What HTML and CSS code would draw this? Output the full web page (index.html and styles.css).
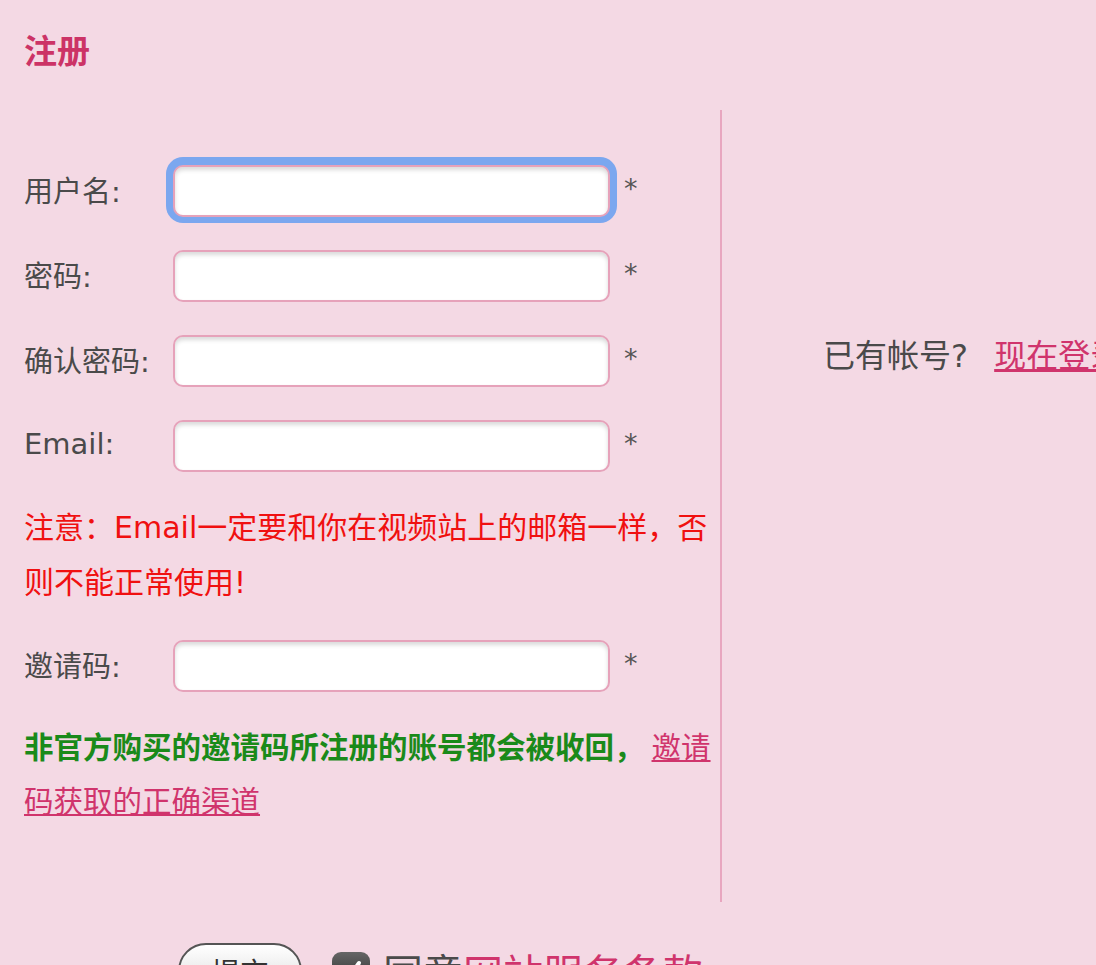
FILE: index.html
```html
<!DOCTYPE html>
<html lang="zh-CN">
<head>
    <meta charset="UTF-8">
    <meta name="viewport" content="width=device-width, initial-scale=1.0">
    <title>注册</title>
    <link rel="stylesheet" href="styles.css">
</head>
<body>

    <div class="page">
        <h1 class="title">注册</h1>

        <div class="main">
            <div class="reg-col">
                <div class="row">
                    <label class="label" for="username">用户名:</label>
                    <input class="field focused" type="text" id="username">
                    <span class="req">*</span>
                </div>
                <div class="row">
                    <label class="label" for="pwd">密码:</label>
                    <input class="field" type="password" id="pwd">
                    <span class="req">*</span>
                </div>
                <div class="row">
                    <label class="label" for="pwd2">确认密码:</label>
                    <input class="field" type="password" id="pwd2">
                    <span class="req">*</span>
                </div>
                <div class="row">
                    <label class="label" for="email">Email:</label>
                    <input class="field" type="text" id="email">
                    <span class="req">*</span>
                </div>

                <p class="note">注意：Email一定要和你在视频站上的邮箱一样，否则不能正常使用!</p>

                <div class="row">
                    <label class="label" for="invite">邀请码:</label>
                    <input class="field" type="text" id="invite">
                    <span class="req">*</span>
                </div>

                <p class="tip"><b>非官方购买的邀请码所注册的账号都会被收回，</b><a href="#">邀请码获取的正确渠道</a></p>
            </div>

            <div class="login-col">
                <p class="login-text">已有帐号? <a href="#">现在登录</a></p>
            </div>
        </div>

        <div class="actions">
            <button class="submit" type="button">提交</button>
            <label class="agree">
                <span class="check">
                    <svg width="26" height="26" viewBox="0 0 26 26"><path d="M6 14 L11 19 L21 5" fill="none" stroke="#fff" stroke-width="4" stroke-linecap="round" stroke-linejoin="round"/></svg>
                </span>
                同意<a href="#">网站服务条款</a>
            </label>
        </div>
    </div>

</body>
</html>
```

FILE: styles.css
```css
* {
    margin: 0;
    padding: 0;
    box-sizing: border-box;
    font-family: "DejaVu Sans", "Noto Sans CJK SC", sans-serif;
}

html, body {
    overflow: hidden;
}

body {
    background-color: #f4d9e4;
    color: #4a4a4a;
}

a {
    color: #d0346c;
}

.page {
    padding: 32px 0 0 24px;
    width: 1400px;
}

.title {
    font-size: 33px;
    line-height: 40px;
    color: #cc3366;
    font-weight: bold;
}

.main {
    display: flex;
    margin-top: 38px;
}

.reg-col {
    width: 698px;
    padding: 55px 6px 73px 0;
    border-right: 2px solid #e8a6bf;
}

.row {
    display: flex;
    align-items: center;
    height: 52px;
    margin-bottom: 33px;
    font-size: 29px;
}

.label {
    width: 149px;
    white-space: nowrap;
    margin-top: -4px;
}

.field {
    width: 437px;
    height: 52px;
    background: #fff;
    border: 2px solid #e6a2ba;
    border-radius: 10px;
    box-shadow: inset 0 3px 4px rgba(0, 0, 0, 0.15);
    outline: none;
    font-size: 26px;
    padding: 0 10px;
}

.field.focused {
    box-shadow: inset 0 3px 4px rgba(0, 0, 0, 0.15), 0 -1px 0 7px #7ba7ef;
}

.req {
    margin-left: 14px;
    font-size: 27px;
    color: #555;
    margin-top: -6px;
}

.note {
    color: #f01010;
    font-size: 30px;
    line-height: 55px;
    margin: -5px 0 30px;
}

.tip {
    font-size: 29.5px;
    line-height: 54px;
    margin-top: -4px;
}

.tip b {
    color: #1a8a1a;
    margin-right: 8px;
}

.login-col {
    padding: 220px 0 0 101px;
}

.login-text {
    font-size: 32px;
    white-space: nowrap;
    color: #4a4a4a;
}

.login-text a {
    margin-left: 16px;
}

.actions {
    display: flex;
    align-items: center;
    margin-top: 40px;
    padding-left: 154px;
}

.submit {
    width: 124px;
    height: 56px;
    border: 2px solid #555;
    border-radius: 28px;
    background: linear-gradient(#ffffff, #d8d8d8);
    font-size: 29px;
    color: #333;
}

.agree {
    display: flex;
    align-items: center;
    margin-left: 30px;
    font-size: 40px;
    white-space: nowrap;
}

.check {
    display: flex;
    align-items: center;
    justify-content: center;
    width: 38px;
    height: 38px;
    border-radius: 9px;
    background: linear-gradient(#666, #222);
    margin-right: 13px;
}

.agree a {
    text-decoration: none;
}
```
